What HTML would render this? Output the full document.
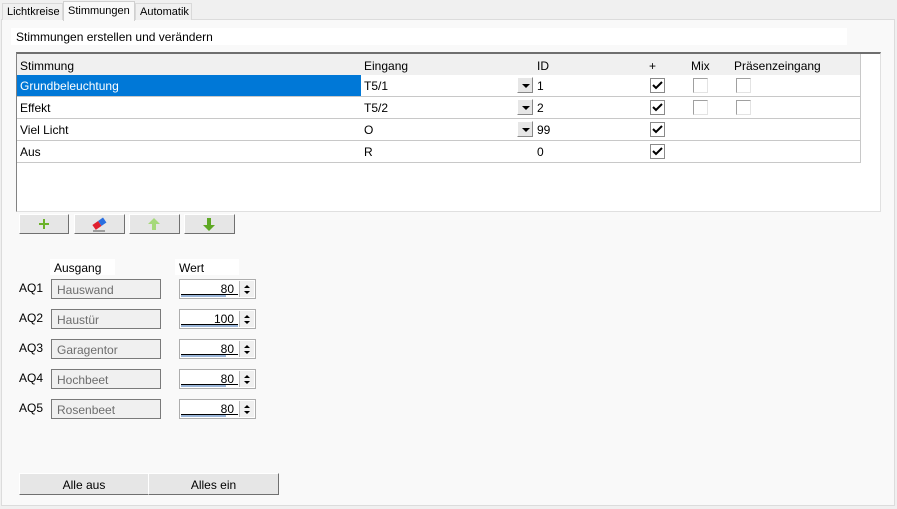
<!DOCTYPE html>
<html><head><meta charset="utf-8"><style>
*{box-sizing:border-box;margin:0;padding:0}
body{width:897px;height:509px;background:#f0f0f0;font-family:"Liberation Sans",sans-serif;font-size:12px;color:#000;position:relative;overflow:hidden}
.a{position:absolute}
.tab{position:absolute;top:3px;height:17px;border:1px solid #d9d9d9;border-bottom:none;background:#f0f0f0;padding:2px 4px 0;font-size:11px}
.panel{position:absolute;left:1px;top:19px;width:894px;height:487px;background:#f9f9f9;border:1px solid #dcdcdc}
.cell{position:absolute;border-right:1px solid #c8c8c8;border-bottom:1px solid #c8c8c8;padding:4px 0 0 3px;height:22px;background:#fff;white-space:nowrap}
.hd{background:#f0f0f0;height:22px;padding-top:5px}
.cb{position:absolute;width:15px;height:15px;border:1px solid #8a8a8a;background:#fff}
.cb.e{border-color:#a0a0a0;border-right-color:#e3e3e3;border-bottom-color:#e3e3e3}
.dd{position:absolute;width:16px;height:16px;background:#e6e6e6;border:1px solid #fff;border-right-color:#888;border-bottom-color:#888}
.dd:after{content:"";position:absolute;left:4px;top:6px;border-left:4px solid transparent;border-right:4px solid transparent;border-top:4px solid #000}
.btn{position:absolute;top:214px;height:20px;background:#e6e6e6;border:1px solid #fff;border-right-color:#707070;border-bottom-color:#707070}
.tb{position:absolute;left:51px;width:110px;height:20px;border:1px solid #7a7a7a;background:#f0f0f0;color:#6d6d6d;padding:3px 0 0 5px}
.lbl{position:absolute;left:19px}
.sp{position:absolute;left:179px;width:77px;height:20px;background:#fff;border:1px solid #adadad}
.sp .v{position:absolute;right:21px;top:2px;color:#000}
.sp .ln{position:absolute;left:1px;top:15px;width:45px;height:2px;background:#9ab5d8}
.sp .ln2{position:absolute;left:1px;top:14px;width:57px;height:1px;background:#000}
.sp .ar{position:absolute;right:1px;top:1px;width:15px;height:16px;background:#f0f0f0;border-left:1px solid #bbb}
.bb{position:absolute;top:473px;height:22px;background:#e6e6e6;border:1px solid #fff;border-right-color:#707070;border-bottom-color:#707070;text-align:center;padding-top:4px}
</style></head><body>
<div class="panel"></div>
<div class="tab" style="left:2px;width:61px">Lichtkreise</div>
<div class="tab" style="left:63px;top:1px;height:20px;width:72px;background:#f9f9f9;border-color:#d0d0d0;padding-top:3px">Stimmungen</div>
<div class="tab" style="left:135px;width:57px">Automatik</div>

<div class="a" style="left:11px;top:28px;width:836px;height:17px;background:#fff;padding:2px 0 0 5px">Stimmungen erstellen und verändern</div>

<div class="a" style="left:16px;top:52px;width:865px;height:160px;background:#fff;border:1px solid #828282;border-top:2px solid #6f6f6f;border-right-color:#e0e0e0;border-bottom-color:#e0e0e0"></div>

<div class="cell hd" style="left:17px;top:54px;width:345px">Stimmung</div>
<div class="cell hd" style="left:361px;top:54px;width:174px">Eingang</div>
<div class="cell hd" style="left:534px;top:54px;width:113px">ID</div>
<div class="cell hd" style="left:646px;top:54px;width:43px">+</div>
<div class="cell hd" style="left:688px;top:54px;width:44px">Mix</div>
<div class="cell hd" style="left:731px;top:54px;width:130px">Präsenzeingang</div>

<div class="cell" style="left:17px;top:75px;width:345px;background:#0078d7;color:#fff">Grundbeleuchtung</div>
<div class="cell" style="left:361px;top:75px;width:174px">T5/1</div>
<div class="cell" style="left:534px;top:75px;width:113px">1</div>
<div class="cell" style="left:646px;top:75px;width:43px"></div>
<div class="cell" style="left:688px;top:75px;width:44px"></div>
<div class="cell" style="left:731px;top:75px;width:130px"></div>

<div class="cell" style="left:17px;top:97px;width:345px">Effekt</div>
<div class="cell" style="left:361px;top:97px;width:174px">T5/2</div>
<div class="cell" style="left:534px;top:97px;width:113px">2</div>
<div class="cell" style="left:646px;top:97px;width:43px"></div>
<div class="cell" style="left:688px;top:97px;width:44px"></div>
<div class="cell" style="left:731px;top:97px;width:130px"></div>

<div class="cell" style="left:17px;top:119px;width:345px">Viel Licht</div>
<div class="cell" style="left:361px;top:119px;width:174px">O</div>
<div class="cell" style="left:534px;top:119px;width:113px">99</div>
<div class="cell" style="left:646px;top:119px;width:43px"></div>
<div class="cell" style="left:688px;top:119px;width:44px"></div>
<div class="cell" style="left:731px;top:119px;width:130px"></div>

<div class="cell" style="left:17px;top:141px;width:345px">Aus</div>
<div class="cell" style="left:361px;top:141px;width:174px">R</div>
<div class="cell" style="left:534px;top:141px;width:113px">0</div>
<div class="cell" style="left:646px;top:141px;width:43px"></div>
<div class="cell" style="left:688px;top:141px;width:44px"></div>
<div class="cell" style="left:731px;top:141px;width:130px"></div>

<div class="dd" style="left:517px;top:77px"></div>
<div class="dd" style="left:517px;top:99px"></div>
<div class="dd" style="left:517px;top:121px"></div>

<svg class="a" style="left:650px;top:78px" width="15" height="82">
<g fill="none" stroke="#8a8a8a" stroke-width="1"><rect x="0.5" y="0.5" width="14" height="14"/><rect x="0.5" y="22.5" width="14" height="14"/><rect x="0.5" y="44.5" width="14" height="14"/><rect x="0.5" y="66.5" width="14" height="14"/></g>
<g fill="none" stroke="#000" stroke-width="2"><path d="M3 7l3 3 6-6"/><path d="M3 29l3 3 6-6"/><path d="M3 51l3 3 6-6"/><path d="M3 73l3 3 6-6"/></g>
</svg>
<div class="cb e" style="left:693px;top:78px"></div>
<div class="cb e" style="left:736px;top:78px"></div>
<div class="cb e" style="left:693px;top:100px"></div>
<div class="cb e" style="left:736px;top:100px"></div>

<div class="btn" style="left:19px;width:50px"><svg width="48" height="18"><path d="M24 4v10M19 9h10" stroke="#6bb22a" stroke-width="2"/></svg></div>
<div class="btn" style="left:74px;width:51px"><svg width="49" height="18"><g transform="rotate(-35 24 9)"><rect x="18" y="6" width="7" height="6" fill="#e02030"/><rect x="25" y="6" width="6" height="6" fill="#2a6fe0"/></g><path d="M18 16h12" stroke="#555"/></svg></div>
<div class="btn" style="left:129px;width:51px"><svg width="49" height="18"><path d="M24 3l-6 6h4v6h4v-6h4z" fill="#a6d97a"/></svg></div>
<div class="btn" style="left:184px;width:51px"><svg width="49" height="18"><path d="M24 16l-6-6h4v-7h4v7h4z" fill="#5ea824"/></svg></div>

<div class="a" style="left:50px;top:259px;width:65px;height:16px;background:#fff;padding:2px 0 0 4px">Ausgang</div>
<div class="a" style="left:175px;top:259px;width:64px;height:16px;background:#fff;padding:2px 0 0 4px">Wert</div>

<div class="lbl" style="top:281px">AQ1</div><div class="tb" style="top:279px">Hauswand</div>
<div class="lbl" style="top:311px">AQ2</div><div class="tb" style="top:309px">Haustür</div>
<div class="lbl" style="top:341px">AQ3</div><div class="tb" style="top:339px">Garagentor</div>
<div class="lbl" style="top:371px">AQ4</div><div class="tb" style="top:369px">Hochbeet</div>
<div class="lbl" style="top:401px">AQ5</div><div class="tb" style="top:399px">Rosenbeet</div>

<div class="sp" style="top:279px"><span class="v">80</span><div class="ln2"></div><div class="ln"></div><div class="ar"><svg width="14" height="16"><path d="M4 7l3-3 3 3zM4 10l3 3 3-3z" fill="#000"/></svg></div></div>
<div class="sp" style="top:309px"><span class="v">100</span><div class="ln2"></div><div class="ln" style="width:57px"></div><div class="ar"><svg width="14" height="16"><path d="M4 7l3-3 3 3zM4 10l3 3 3-3z" fill="#000"/></svg></div></div>
<div class="sp" style="top:339px"><span class="v">80</span><div class="ln2"></div><div class="ln"></div><div class="ar"><svg width="14" height="16"><path d="M4 7l3-3 3 3zM4 10l3 3 3-3z" fill="#000"/></svg></div></div>
<div class="sp" style="top:369px"><span class="v">80</span><div class="ln2"></div><div class="ln"></div><div class="ar"><svg width="14" height="16"><path d="M4 7l3-3 3 3zM4 10l3 3 3-3z" fill="#000"/></svg></div></div>
<div class="sp" style="top:399px"><span class="v">80</span><div class="ln2"></div><div class="ln"></div><div class="ar"><svg width="14" height="16"><path d="M4 7l3-3 3 3zM4 10l3 3 3-3z" fill="#000"/></svg></div></div>

<div class="bb" style="left:19px;width:130px">Alle aus</div>
<div class="bb" style="left:148px;width:131px">Alles ein</div>
</body></html>
